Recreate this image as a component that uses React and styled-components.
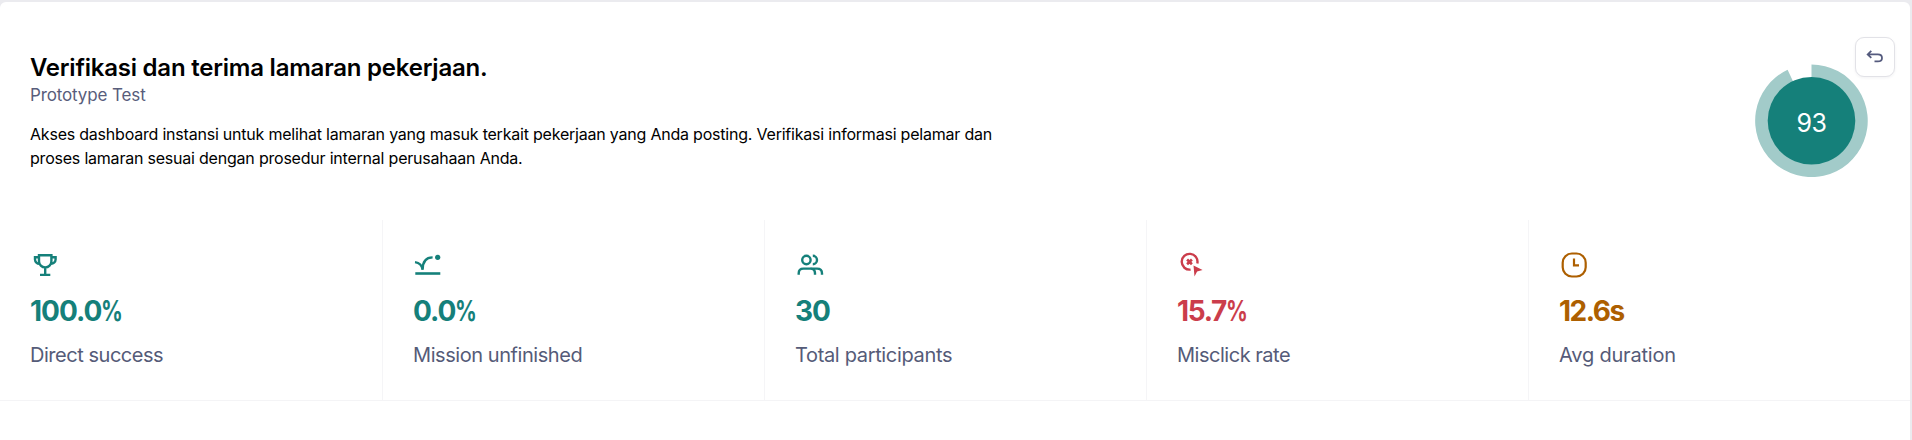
import React from "react";
import styled, { createGlobalStyle } from "styled-components";

const GlobalStyle = createGlobalStyle`
  *, *::before, *::after { box-sizing: border-box; }
  body {
    margin: 0;
    background: #ebebef;
    font-family: Inter, "Liberation Sans", sans-serif;
    color: #000;
  }
`;

const Page = styled.div`
  height: 440px;
  padding: 2px 2px 0 0;
  overflow: hidden;
`;

const Panel = styled.main`
  height: 438px;
  background: #fff;
  border-radius: 6px 6px 0 0;
`;

const Header = styled.header`
  position: relative;
  display: flex;
  justify-content: space-between;
  height: 218px;
  padding: 48px 42px 0 30px;
`;

const Intro = styled.div`
  width: 980px;
`;

const Title = styled.h1`
  margin: 0;
  padding-top: 1px;
  font-size: 24px;
  line-height: 33px;
  font-weight: 600;
  letter-spacing: -0.22px;
`;

const Kind = styled.p`
  margin: 0;
  font-size: 17px;
  line-height: 22px;
  letter-spacing: -0.13px;
  color: #585d7b;
`;

const Description = styled.p`
  margin: 16px 0 0;
  font-size: 16px;
  line-height: 24px;
  letter-spacing: -0.213px;
`;

const DescriptionLine = styled.span`
  display: block;
  white-space: nowrap;
`;

const Gauge = styled.div`
  display: grid;
  place-items: center;
  width: 113px;
  height: 113px;
  margin-top: 14px;

  > * { grid-area: 1 / 1; }
`;

const Score = styled.span`
  color: #fff;
  font-size: 25px;
  line-height: 28px;
  letter-spacing: -0.5px;
  padding-top: 4px;
`;

const ResetButton = styled.button`
  position: absolute;
  top: 35px;
  right: 15px;
  display: grid;
  place-items: center;
  width: 40px;
  height: 40px;
  padding: 0;
  border: 1px solid #e2e2e7;
  border-radius: 9px;
  background: #fff;
  box-shadow: 0 1px 3px rgba(30, 30, 60, 0.06);
  color: #555b7e;
`;

const Stats = styled.section`
  display: grid;
  grid-template-columns: repeat(5, 382px);
  height: 181px;
  border-bottom: 1px solid #f4f4f6;
`;

const Stat = styled.article`
  padding: 30px 0 0 30px;
  color: ${(p) => p.$color};
  border-left: ${(p) => (p.$first ? "0" : "1px solid #f5f5f7")};

  svg { display: block; }
`;

const Value = styled.div`
  margin-top: 11px;
  font-size: 28px;
  line-height: 40px;
  font-weight: 700;
  letter-spacing: ${(p) => p.$tracking};
`;

const Unit = styled.span`
  display: inline-block;
  transform: scaleX(0.77);
  transform-origin: left center;
`;

const Label = styled.div`
  margin-top: 8px;
  font-size: 20px;
  line-height: 32px;
  letter-spacing: ${(p) => p.$tracking};
  color: #555b78;
`;

const Icon = ({ children }) => (
  <svg width="30" height="30" viewBox="0 0 30 30" fill="none" stroke="currentColor" strokeWidth="2.4">
    {children}
  </svg>
);

const TrophyIcon = () => (
  <Icon>
    <path d="M9 5.2H21.4V11.2A6.2 6.2 0 0 1 9 11.2ZM9 7.2H5V9.5A4.4 4.4 0 0 0 9.6 13.8M21.4 7.2H25.6V9.5A4.4 4.4 0 0 1 20.8 13.8M15.2 17.5V24.5M10 24.9H20.3" />
  </Icon>
);

const BounceIcon = () => (
  <Icon>
    <path d="M2 12.1C5.8 12.6 9 15.2 9.6 19.8C9.6 12 13 7.4 19.6 7.4" />
    <circle cx="24.7" cy="7.3" r="2.6" fill="currentColor" stroke="none" />
    <path d="M2.3 23.5H27.3" strokeWidth="2.6" />
  </Icon>
);

const PeopleIcon = () => (
  <Icon>
    <circle cx="11.4" cy="10" r="4.2" />
    <path d="M17.8 5.8A4.2 4.2 0 0 1 17.8 14.2M3.7 24.8V23.2Q3.7 18.6 8.5 18.6H15.2Q20 18.6 20 23.2V24.8M15.5 18.6H22Q27 18.6 27 23.2V24.8" />
  </Icon>
);

const MisclickIcon = () => (
  <Icon>
    <path d="M13.6 19.6A7.9 7.9 0 1 1 20.3 13.5" />
    <path d="M10.1 9.5L14.9 14.2M14.9 9.5L10.1 14.2" strokeWidth="2.6" />
    <path d="M16.5 15.5L25.6 20.1L20.1 21.4L17.5 26.5Z" fill="currentColor" stroke="none" />
  </Icon>
);

const ClockIcon = () => (
  <Icon>
    <rect x="3.7" y="3.5" width="23" height="23" rx="9.2" strokeWidth="2.2" />
    <path d="M15 8.5V15.3H20" strokeWidth="2.2" />
  </Icon>
);

const ScoreRing = () => (
  <svg width="113" height="113" viewBox="0 0 113 113">
    <path d="M56.5 56.8V.5A56.3 56.3 0 1 1 32.6 5.8Z" fill="#a2cbc9" />
    <circle cx="56.5" cy="56.8" r="43.8" fill="#15807a" />
  </svg>
);

const UndoIcon = () => (
  <svg width="18" height="16" viewBox="0 0 18 16" fill="none" stroke="currentColor" strokeWidth="1.8">
    <path d="M5.3 1.9L1.7 5.4L5.3 8.9M1.9 5.4H11.8Q16 5.4 16 8.9Q16 12.4 11.8 12.4H8.5" />
  </svg>
);

const stats = [
  { icon: TrophyIcon, value: "100.0", unit: "%", label: "Direct success", color: "#15807a", vt: "-1px", lt: "-0.47px" },
  { icon: BounceIcon, value: "0.0", unit: "%", label: "Mission unfinished", color: "#15807a", vt: "-1px", lt: "-0.44px" },
  { icon: PeopleIcon, value: "30", label: "Total participants", color: "#15807a", vt: "-1px", lt: "-0.34px" },
  { icon: MisclickIcon, value: "15.7", unit: "%", label: "Misclick rate", color: "#cb3d4b", vt: "-1.3px", lt: "-0.48px" },
  { icon: ClockIcon, value: "12.6s", label: "Avg duration", color: "#ad5f00", vt: "-1.5px", lt: "-0.2px" },
];

export default function App() {
  return (
    <Page>
      <GlobalStyle />
      <Panel>
        <Header>
          <Intro>
            <Title>Verifikasi dan terima lamaran pekerjaan.</Title>
            <Kind>Prototype Test</Kind>
            <Description>
              <DescriptionLine>
                Akses dashboard instansi untuk melihat lamaran yang masuk terkait pekerjaan yang Anda posting. Verifikasi informasi pelamar dan
              </DescriptionLine>
              <DescriptionLine>
                proses lamaran sesuai dengan prosedur internal perusahaan Anda.
              </DescriptionLine>
            </Description>
          </Intro>
          <Gauge>
            <ScoreRing />
            <Score>93</Score>
          </Gauge>
          <ResetButton aria-label="Reset">
            <UndoIcon />
          </ResetButton>
        </Header>
        <Stats>
          {stats.map(({ icon: StatIcon, value, unit, label, color, vt, lt }, i) => (
            <Stat key={label} $color={color} $first={i === 0}>
              <StatIcon />
              <Value $tracking={vt}>
                {value}
                {unit && <Unit>{unit}</Unit>}
              </Value>
              <Label $tracking={lt}>{label}</Label>
            </Stat>
          ))}
        </Stats>
      </Panel>
    </Page>
  );
}
